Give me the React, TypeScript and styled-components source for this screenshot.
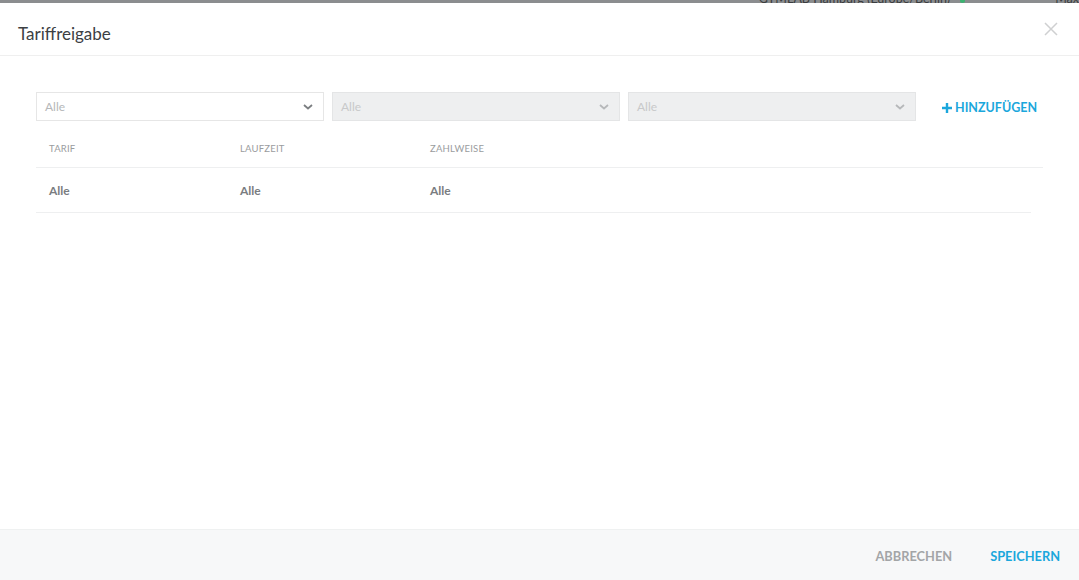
import React from 'react'
import styled, { createGlobalStyle } from 'styled-components'

const GlobalStyle = createGlobalStyle`
  html, body {
    margin: 0;
    padding: 0;
    background: #fff;
    font-family: Lato, "Noto Sans", sans-serif;
  }
`

const Page = styled.div`
  width: 1079px;
  height: 580px;
  display: flex;
  flex-direction: column;
  overflow: hidden;
`

const Backdrop = styled.div`
  height: 3px;
  background: #8b8d8f;
  display: flex;
  justify-content: flex-end;
  align-items: flex-end;
  overflow: hidden;
  gap: 10px;
  flex-shrink: 0;
`

const BackdropText = styled.span`
  font-size: 12.5px;
  line-height: 9px;
  color: #3a3c3e;
  white-space: nowrap;
`

const StatusDot = styled.span`
  width: 5px;
  height: 5px;
  border-radius: 50%;
  background: #3cb371;
  margin-right: 80px;
`

const Modal = styled.div`
  flex: 1;
  display: flex;
  flex-direction: column;
  background: #fff;
`

const Header = styled.div`
  height: 53px;
  display: flex;
  align-items: center;
  justify-content: space-between;
  padding: 0 21px 0 18px;
  border-bottom: 1px solid #efefef;
  box-sizing: border-box;
`

const Title = styled.h4`
  margin: 8px 0 0;
  font-size: 17px;
  font-weight: 400;
  color: #3c4043;
`

const Close = styled.button`
  border: 0;
  background: none;
  padding: 0;
  cursor: pointer;
  display: flex;
`

const Body = styled.div`
  flex: 1;
  padding: 36px 36px 0 36px;
`

const FilterRow = styled.div`
  display: flex;
  align-items: center;
  gap: 8px;
`

const Select = styled.div<{ $disabled?: boolean }>`
  width: 288px;
  height: 29px;
  box-sizing: border-box;
  border: 1px solid ${p => (p.$disabled ? '#e4e5e6' : '#e6e6e6')};
  background: ${p => (p.$disabled ? '#eeeff0' : '#fff')};
  display: flex;
  align-items: center;
  justify-content: space-between;
  padding: 0 10px 0 8px;
  font-size: 12px;
  color: ${p => (p.$disabled ? '#c8c9ca' : '#b5b7b9')};
`

const AddButton = styled.button`
  margin-left: 18px;
  margin-top: 2px;
  border: 0;
  background: none;
  padding: 0;
  display: flex;
  align-items: center;
  gap: 3px;
  font-family: inherit;
  font-size: 12.5px;
  font-weight: 700;
  letter-spacing: 0;
  color: #1ba7dc;
  cursor: pointer;
`

const Table = styled.div`
  margin-top: 8px;
  width: 1007px;
`

const Row = styled.div<{ $head?: boolean }>`
  display: grid;
  grid-template-columns: 191px 190px 1fr;
  align-items: center;
  height: ${p => (p.$head ? '39px' : '45px')};
  padding-left: 13px;
  border-bottom: 1px solid #eeeff0;
  box-sizing: border-box;
  margin-right: ${p => (p.$head ? '0' : '12px')};
`

const HeadCell = styled.span`
  font-size: 9.5px;
  letter-spacing: 0.2px;
  color: #9a9c9e;
  text-transform: uppercase;
`

const Cell = styled.span`
  font-size: 12px;
  font-weight: 700;
  color: #7a7d81;
  margin-top: 1px;
`

const Footer = styled.div`
  height: 51px;
  background: #f7f8f9;
  border-top: 1px solid #eff1f1;
  box-sizing: border-box;
  display: flex;
  align-items: center;
  justify-content: flex-end;
  padding-right: 19px;
  gap: 38px;
`

const FooterButton = styled.button<{ $primary?: boolean }>`
  border: 0;
  background: none;
  padding: 0;
  margin-top: 1px;
  font-family: inherit;
  font-size: 12.8px;
  font-weight: 700;
  letter-spacing: 0;
  color: ${p => (p.$primary ? '#1ba7dc' : '#a3a5a7')};
  cursor: pointer;
`

const Chevron = ({ color }: { color: string }) => (
  <svg width="10" height="6" viewBox="0 0 10 6">
    <path d="M1 1l4 3.5L9 1" fill="none" stroke={color} strokeWidth="1.8" />
  </svg>
)

const columns = ['Tarif', 'Laufzeit', 'Zahlweise']

export default function App() {
  return (
    <>
      <GlobalStyle />
      <Page>
        <Backdrop>
          <BackdropText>GYMLAB Hamburg (Europe/Berlin)</BackdropText>
          <StatusDot />
          <BackdropText>Max</BackdropText>
        </Backdrop>
        <Modal>
          <Header>
            <Title>Tariffreigabe</Title>
            <Close aria-label="Schließen">
              <svg width="14" height="14" viewBox="0 0 14 14">
                <path d="M1 1l12 12M13 1L1 13" stroke="#cfd0d1" strokeWidth="1.5" />
              </svg>
            </Close>
          </Header>
          <Body>
            <FilterRow>
              <Select>
                Alle
                <Chevron color="#7b7e81" />
              </Select>
              <Select $disabled>
                Alle
                <Chevron color="#b6b8ba" />
              </Select>
              <Select $disabled>
                Alle
                <Chevron color="#b6b8ba" />
              </Select>
              <AddButton>
                <svg width="10" height="10" viewBox="0 0 10 10">
                  <path d="M5 0v10M0 5h10" stroke="#1ba7dc" strokeWidth="2.4" />
                </svg>
                HINZUFÜGEN
              </AddButton>
            </FilterRow>
            <Table>
              <Row $head>
                {columns.map(c => (
                  <HeadCell key={c}>{c}</HeadCell>
                ))}
              </Row>
              <Row>
                <Cell>Alle</Cell>
                <Cell>Alle</Cell>
                <Cell>Alle</Cell>
              </Row>
            </Table>
          </Body>
          <Footer>
            <FooterButton>ABBRECHEN</FooterButton>
            <FooterButton $primary>SPEICHERN</FooterButton>
          </Footer>
        </Modal>
      </Page>
    </>
  )
}
